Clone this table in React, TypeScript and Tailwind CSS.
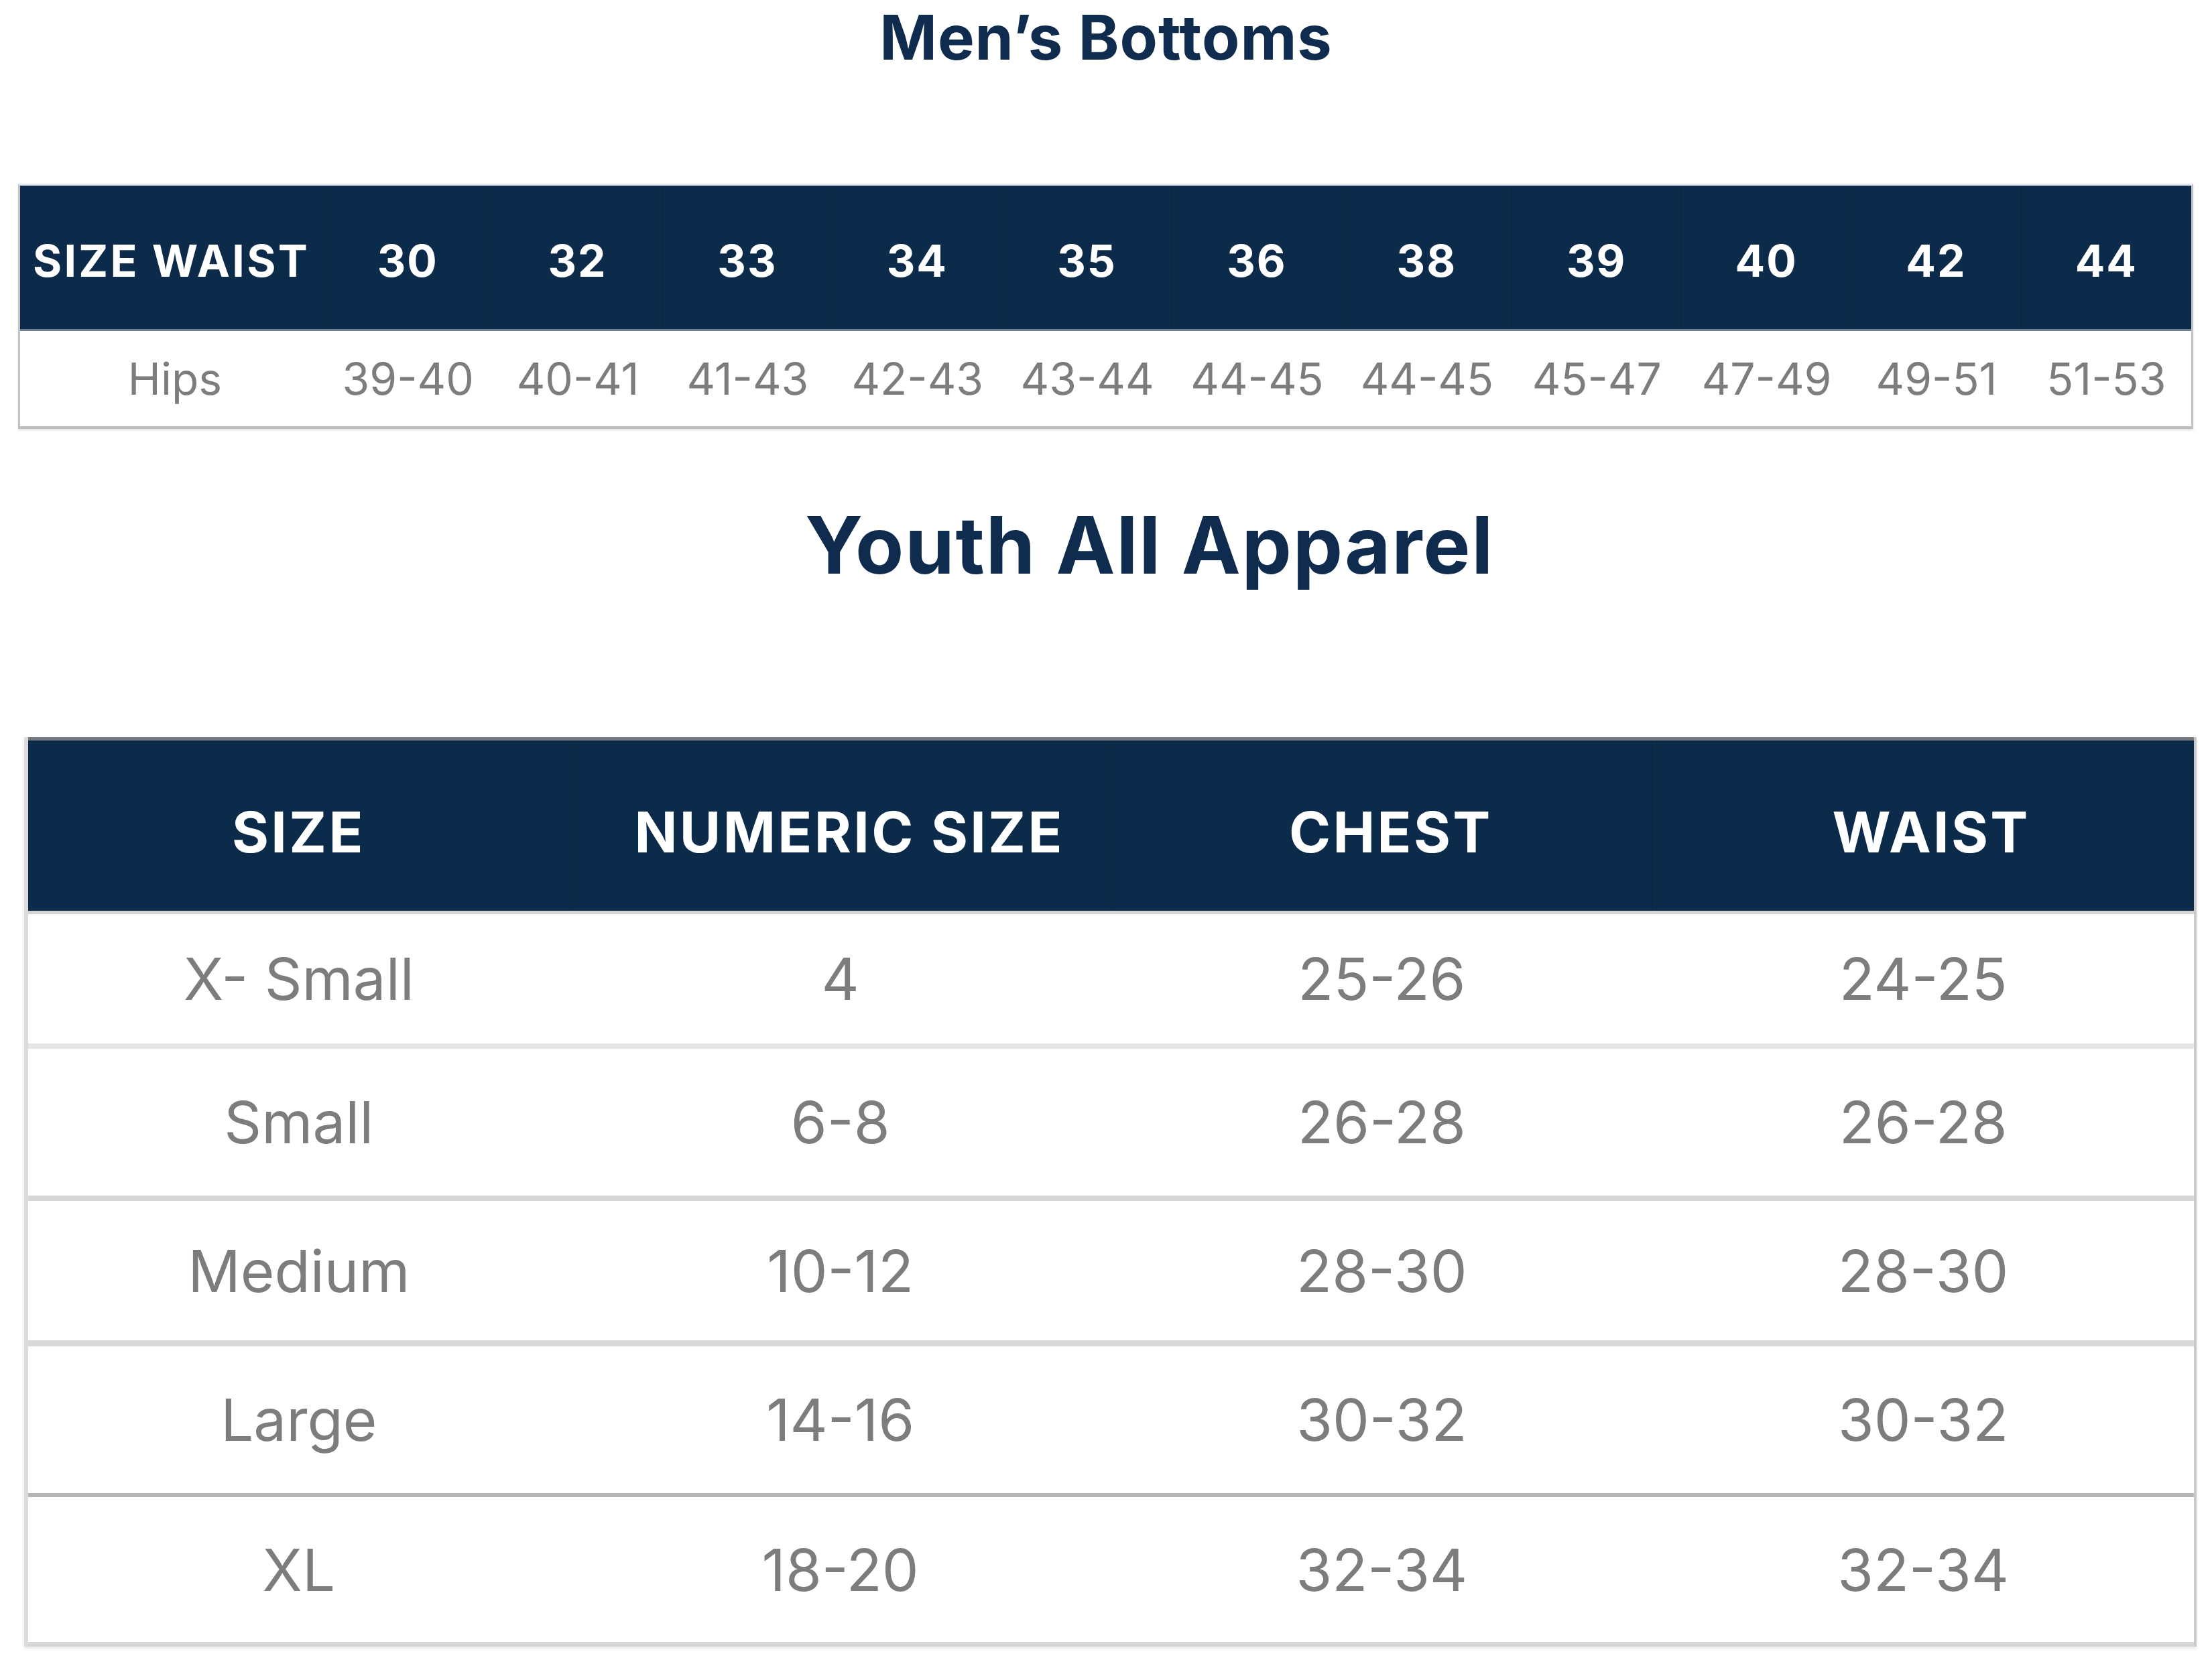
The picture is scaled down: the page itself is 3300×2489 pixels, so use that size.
import React from "react";

const hipsRow = ["39-40", "40-41", "41-43", "42-43", "43-44", "44-45", "44-45", "45-47", "47-49", "49-51", "51-53"];
const waistRow = ["30", "32", "33", "34", "35", "36", "38", "39", "40", "42", "44"];

const youthRows = [
  { cells: ["X- Small", "4", "25-26", "24-25"], h: "h-[201px]", b: "border-b-[8px] border-[#e6e6e6]" },
  { cells: ["Small", "6-8", "26-28", "26-28"], h: "h-[227px]", b: "border-b-[8px] border-[#d6d6d6]" },
  { cells: ["Medium", "10-12", "28-30", "28-30"], h: "h-[217px]", b: "border-b-[9px] border-[#d9d9d9]" },
  { cells: ["Large", "14-16", "30-32", "30-32"], h: "h-[225px]", b: "border-b-[6px] border-[#b5b5b5]" },
  { cells: ["XL", "18-20", "32-34", "32-34"], h: "h-[223px]", b: "border-b-[7px] border-[#d6d6d6]" },
];

const youthHeaders = [
  { t: "SIZE", pad: "pl-[0px]" },
  { t: "NUMERIC SIZE", pad: "pl-[28px]" },
  { t: "CHEST", pad: "pl-[28px]" },
  { t: "WAIST", pad: "pl-[24px]" },
];

export default function App() {
  return (
    <div className="w-[3300px] h-[2489px] bg-white font-['Inter','Liberation_Sans',sans-serif] overflow-hidden">
      {/* Title 1 */}
      <div className="text-center text-[92px] leading-[1.22] font-bold text-[#0f2c4e] tracking-[0.01em]">
        Men’s Bottoms
      </div>

      {/* Table 1 */}
      <div className="mt-[162px] ml-[27px] w-[3245px] border-t-[3px] border-[#e3e9ee] border-x-[3px] border-x-[#c4c4c4] border-b-[4px] border-b-[#bdbdbd] shadow-[0_2px_3px_rgba(0,0,0,0.12)]">
        <div className="grid grid-cols-[452px_repeat(11,1fr)] h-[217px] bg-[#0c2a4a] border-b-[3px] border-[#6d8091] text-white font-bold text-[66px] tracking-[0.03em] leading-none">
          <div className="flex items-center justify-center pt-[10px] border-r border-[#0a2643] tracking-[0.05em]">SIZE WAIST</div>
          {waistRow.map((w, i) => (
            <div key={i} className="flex items-center justify-center pt-[10px] border-r border-[#0a2643] last:border-r-0">
              {w}
            </div>
          ))}
        </div>
        <div className="grid grid-cols-[452px_repeat(11,1fr)] h-[142px] bg-white text-[#7d7d7d] text-[66px] leading-none">
          <div className="flex items-center justify-center pl-[10px]">Hips</div>
          {hipsRow.map((h, i) => (
            <div key={i} className="flex items-center justify-center">
              {h}
            </div>
          ))}
        </div>
      </div>

      {/* Title 2 */}
      <div className="mt-[114px] pl-[130px] text-center text-[118px] leading-none font-bold text-[#0f2c4e] tracking-[0.015em]">
        Youth All Apparel
      </div>

      {/* Table 2 */}
      <div className="mt-[228px] ml-[36px] w-[3241px] border-l-[6px] border-l-[#dcdcdc] border-r-[4px] border-r-[#cbcbcb] shadow-[0_3px_4px_rgba(0,0,0,0.10)]">
        <div className="grid grid-cols-4 h-[264px] bg-[#0c2a4a] border-t-[5px] border-t-[#777b80] border-b-[5px] border-b-[#d3d3d3] text-white font-bold text-[84px] tracking-[0.04em] leading-none">
          {youthHeaders.map((h, i) => (
            <div key={i} className={`flex items-center justify-center pt-[20px] border-r border-[#0a2643] last:border-r-0 ${h.pad}`}>
              {h.t}
            </div>
          ))}
        </div>
        {youthRows.map((r, ri) => (
          <div key={ri} className={`grid grid-cols-4 bg-white text-[#7d7d7d] text-[87px] leading-none ${r.h} ${r.b}`}>
            {r.cells.map((c, ci) => (
              <div key={ci} className="flex items-center justify-center">
                {c}
              </div>
            ))}
          </div>
        ))}
      </div>
    </div>
  );
}
